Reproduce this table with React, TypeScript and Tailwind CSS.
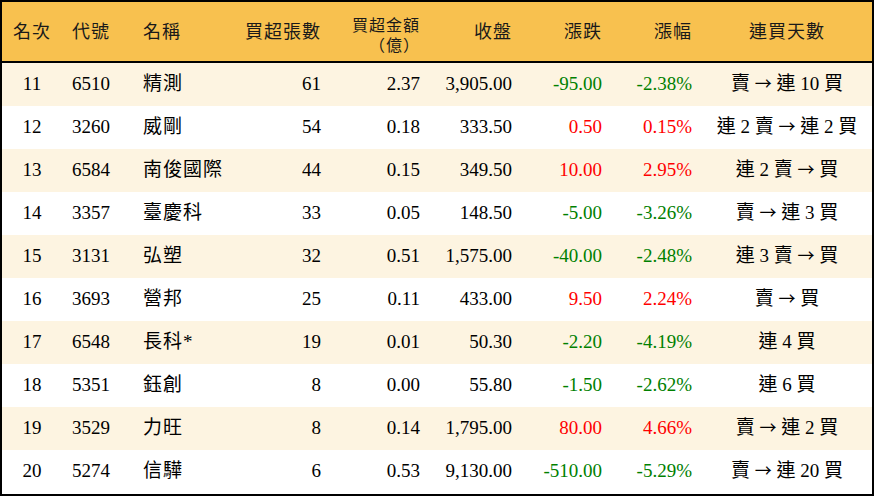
const rows = [
  { rank: 11, code: "6510", name: "精測", vol: "61", amt: "2.37", close: "3,905.00", chg: "-95.00", pct: "-2.38%", streak: "賣 → 連 10 買" },
  { rank: 12, code: "3260", name: "威剛", vol: "54", amt: "0.18", close: "333.50", chg: "0.50", pct: "0.15%", streak: "連 2 賣 → 連 2 買" },
  { rank: 13, code: "6584", name: "南俊國際", vol: "44", amt: "0.15", close: "349.50", chg: "10.00", pct: "2.95%", streak: "連 2 賣 → 買" },
  { rank: 14, code: "3357", name: "臺慶科", vol: "33", amt: "0.05", close: "148.50", chg: "-5.00", pct: "-3.26%", streak: "賣 → 連 3 買" },
  { rank: 15, code: "3131", name: "弘塑", vol: "32", amt: "0.51", close: "1,575.00", chg: "-40.00", pct: "-2.48%", streak: "連 3 賣 → 買" },
  { rank: 16, code: "3693", name: "營邦", vol: "25", amt: "0.11", close: "433.00", chg: "9.50", pct: "2.24%", streak: "賣 → 買" },
  { rank: 17, code: "6548", name: "長科*", vol: "19", amt: "0.01", close: "50.30", chg: "-2.20", pct: "-4.19%", streak: "連 4 買" },
  { rank: 18, code: "5351", name: "鈺創", vol: "8", amt: "0.00", close: "55.80", chg: "-1.50", pct: "-2.62%", streak: "連 6 買" },
  { rank: 19, code: "3529", name: "力旺", vol: "8", amt: "0.14", close: "1,795.00", chg: "80.00", pct: "4.66%", streak: "賣 → 連 2 買" },
  { rank: 20, code: "5274", name: "信驊", vol: "6", amt: "0.53", close: "9,130.00", chg: "-510.00", pct: "-5.29%", streak: "賣 → 連 20 買" },
];

const cols = "grid grid-cols-[60px_73px_95px_101px_99px_92px_90px_90px_170px]";

// the arrow in the picture is wide, so take it from the CJK font
function Streak({ text }: { text: string }) {
  const parts = text.split("→");
  return (
    <>
      {parts.map((p, i) => (
        <span key={i}>
          {p}
          {i < parts.length - 1 && (
            <span style={{ fontFamily: '"Noto Sans CJK TC", sans-serif' }} className="text-[17px]">
              →
            </span>
          )}
        </span>
      ))}
    </>
  );
}

export default function App() {
  return (
    <div
      className="w-[874px] h-[496px] bg-white text-[19px] text-black"
      style={{ fontFamily: '"Liberation Serif", "Noto Sans CJK TC", serif' }}
    >
      <div className="border-2 border-black h-[496px] flex flex-col">
        <div className={`${cols} h-[61px] bg-[#f8c14f] border-b-2 border-black items-center leading-[20px] text-[#1a1a1a] text-[18px] tracking-[1px]`}>
          <div className="text-center">名次</div>
          <div className="pl-[10px]">代號</div>
          <div className="pl-[8px]">名稱</div>
          <div className="text-right pr-[10px]">買超張數</div>
          <div className="text-right pr-[10px] text-[16px] leading-[20px] pt-[8px]">
            <div>買超金額</div>
            <div>（億）</div>
          </div>
          <div className="text-right pr-[10px]">收盤</div>
          <div className="text-right pr-[10px]">漲跌</div>
          <div className="text-right pr-[10px]">漲幅</div>
          <div className="text-center">連買天數</div>
        </div>
        {rows.map((r, i) => {
          const up = !r.chg.startsWith("-");
          const color = up ? "text-[#ff0000]" : "text-[#008000]";
          return (
            <div
              key={r.rank}
              className={`${cols} h-[43px] items-center ${i % 2 === 0 ? "bg-[#fdf4e1]" : "bg-white"}`}
            >
              <div className="text-center">{r.rank}</div>
              <div className="pl-[10px]">{r.code}</div>
              <div className="pl-[8px] tracking-[1px]">{r.name}</div>
              <div className="text-right pr-[10px]">{r.vol}</div>
              <div className="text-right pr-[10px]">{r.amt}</div>
              <div className="text-right pr-[10px]">{r.close}</div>
              <div className={`text-right pr-[10px] ${color}`}>{r.chg}</div>
              <div className={`text-right pr-[10px] ${color}`}>{r.pct}</div>
              <div className="text-center">
                <Streak text={r.streak} />
              </div>
            </div>
          );
        })}
      </div>
    </div>
  );
}
